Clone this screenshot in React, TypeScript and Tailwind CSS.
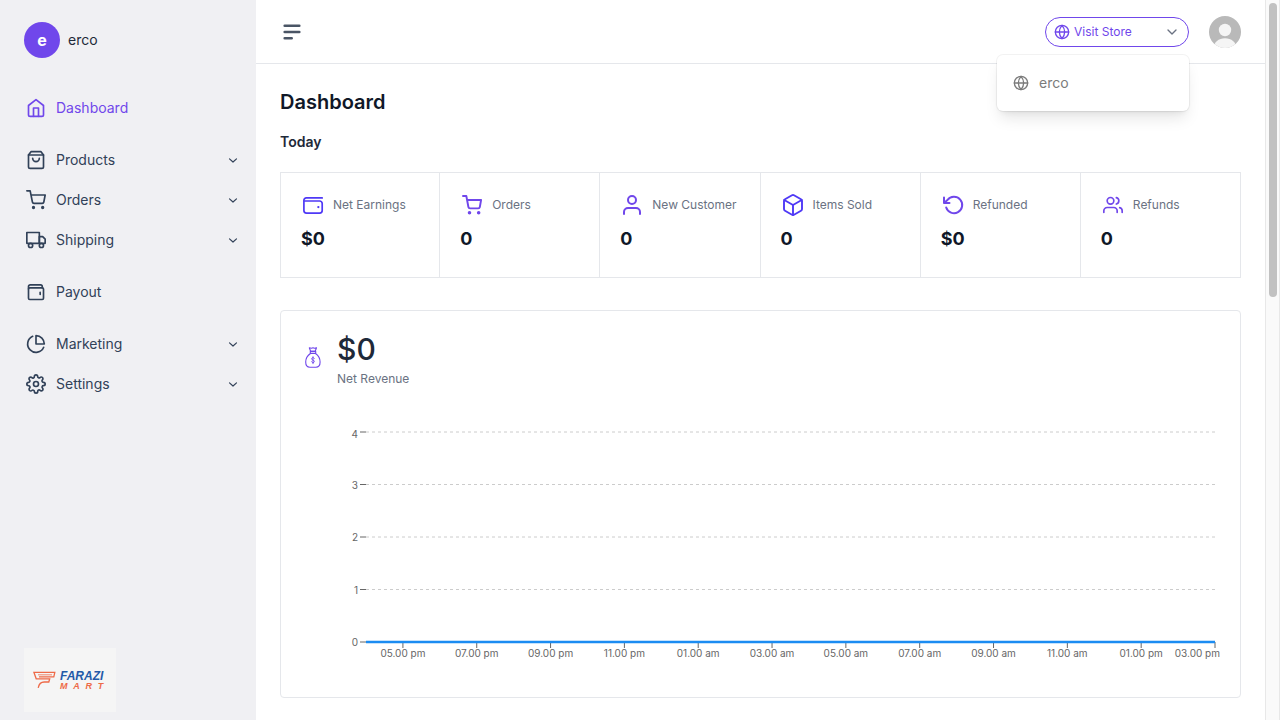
import type { ReactNode } from 'react';

function Icon({ size = 20, stroke = 2, className = '', children }: { size?: number; stroke?: number; className?: string; children: ReactNode }) {
  return (
    <svg
      width={size}
      height={size}
      viewBox="0 0 24 24"
      fill="none"
      stroke="currentColor"
      strokeWidth={stroke}
      strokeLinecap="round"
      strokeLinejoin="round"
      aria-hidden="true"
      className={`shrink-0 ${className}`}
    >
      {children}
    </svg>
  );
}

const home = (
  <>
    <path d="M3 9l9-7 9 7v11a2 2 0 0 1-2 2H5a2 2 0 0 1-2-2z" />
    <path d="M9 22V12h6v10" />
  </>
);
const bag = (
  <>
    <path d="M6 2L3 6v14a2 2 0 0 0 2 2h14a2 2 0 0 0 2-2V6l-3-4z" />
    <path d="M3 6h18" />
    <path d="M16 10a4 4 0 0 1-8 0" />
  </>
);
const cart = (
  <>
    <circle cx="9" cy="21" r="1" />
    <circle cx="20" cy="21" r="1" />
    <path d="M1 1h4l2.68 13.39a2 2 0 0 0 2 1.61h9.72a2 2 0 0 0 2-1.61L23 6H6" />
  </>
);
const truck = (
  <>
    <path d="M1 3h15v13H1z" />
    <path d="M16 8h4l3 3v5h-7z" />
    <circle cx="5.5" cy="18.5" r="2.5" />
    <circle cx="18.5" cy="18.5" r="2.5" />
  </>
);
const payout = (
  <>
    <rect x="3" y="7" width="18" height="14" rx="1.5" />
    <path d="M3 8V5.500a2 2 0 0 1 2-2h12.500a2 2 0 0 1 2 2V7" />
    <path d="M17 12.500v2.500" />
  </>
);
const pie = (
  <>
    <path d="M21.210 15.890A10 10 0 1 1 8 2.830" />
    <path d="M22 12A10 10 0 0 0 12 2v10z" />
  </>
);
const gear = (
  <>
    <circle cx="12" cy="12" r="3" />
    <path d="M19.4 15a1.65 1.65 0 0 0 .33 1.82l.06.06a2 2 0 0 1 0 2.83 2 2 0 0 1-2.83 0l-.06-.06a1.65 1.65 0 0 0-1.82-.33 1.65 1.65 0 0 0-1 1.51V21a2 2 0 0 1-2 2 2 2 0 0 1-2-2v-.09A1.65 1.65 0 0 0 9 19.4a1.65 1.65 0 0 0-1.82.33l-.06.06a2 2 0 0 1-2.83 0 2 2 0 0 1 0-2.83l.06-.06a1.65 1.65 0 0 0 .33-1.82 1.65 1.65 0 0 0-1.51-1H3a2 2 0 0 1-2-2 2 2 0 0 1 2-2h.09A1.65 1.65 0 0 0 4.6 9a1.65 1.65 0 0 0-.33-1.82l-.06-.06a2 2 0 0 1 0-2.83 2 2 0 0 1 2.83 0l.06.06a1.65 1.65 0 0 0 1.82.33H9a1.65 1.65 0 0 0 1-1.51V3a2 2 0 0 1 2-2 2 2 0 0 1 2 2v.09a1.65 1.65 0 0 0 1 1.51 1.65 1.65 0 0 0 1.82-.33l.06-.06a2 2 0 0 1 2.83 0 2 2 0 0 1 0 2.83l-.06.06a1.65 1.65 0 0 0-.33 1.82V9a1.65 1.65 0 0 0 1.51 1H21a2 2 0 0 1 2 2 2 2 0 0 1-2 2h-.09a1.65 1.65 0 0 0-1.51 1z" />
  </>
);
const globe = (
  <>
    <circle cx="12" cy="12" r="10" />
    <path d="M2 12h20" />
    <path d="M12 2a15.3 15.3 0 0 1 4 10 15.3 15.3 0 0 1-4 10 15.3 15.3 0 0 1-4-10 15.3 15.3 0 0 1 4-10z" />
  </>
);
const chevron = <path d="M6 9l6 6 6-6" />;
const smallChevron = <path d="M6 10l6 5.500 6-5.500" />;

type NavItem = { label: string; icon: ReactNode; children?: boolean; active?: boolean };

const navGroups: NavItem[][] = [
  [{ label: 'Dashboard', icon: home, active: true }],
  [
    { label: 'Products', icon: bag, children: true },
    { label: 'Orders', icon: cart, children: true },
    { label: 'Shipping', icon: truck, children: true },
  ],
  [{ label: 'Payout', icon: payout }],
  [
    { label: 'Marketing', icon: pie, children: true },
    { label: 'Settings', icon: gear, children: true },
  ],
];

function NavRow({ item }: { item: NavItem }) {
  const content = (
    <>
      <Icon>{item.icon}</Icon>
      <span className="grow text-left">{item.label}</span>
      {item.children && <Icon size={14}>{smallChevron}</Icon>}
    </>
  );
  if (item.children) {
    return (
      <button type="button" className="flex h-10 w-full items-center gap-2.5 pr-4 pl-[26px] text-slate-700">
        {content}
      </button>
    );
  }
  return (
    <a href="#" className={`flex h-10 items-center gap-2.5 pr-4 pl-[26px] ${item.active ? 'text-[#7047eb]' : 'text-slate-700'}`}>
      {content}
    </a>
  );
}

function FaraziLogo() {
  return (
    <div className="mb-2 ml-6 flex h-16 w-[92px] items-center gap-1 bg-[#f5f5f5] pl-[9px]">
      <svg width="23" height="18" viewBox="0 0 23 18" fill="none" stroke="#ee6a48" strokeWidth="1.300" aria-hidden="true">
        <path d="M6 5.800h14.800l1-4.500H.9l2.300 6.500h13.500l-.9 3.200h-4.600c-3.300 0-5.200 2-6 5.800" />
        <path d="M5 3.800h14" strokeWidth=".8" />
      </svg>
      <div className="font-['Liberation_Sans'] italic">
        <div className="text-xs leading-3 font-bold text-[#245aa8]">FARAZI</div>
        <div className="flex justify-between text-[9px] leading-2 font-bold text-[#ee6a48]">
          <span>M</span>
          <span>A</span>
          <span>R</span>
          <span>T</span>
        </div>
      </div>
    </div>
  );
}

function Sidebar() {
  return (
    <aside className="flex w-64 shrink-0 flex-col bg-[#f0f0f3] text-sm">
      <div className="flex items-center gap-2 px-6 pt-[22px] pb-[30px] text-gray-800">
        <span className="flex size-9 items-center justify-center rounded-full bg-[#7047eb] text-base font-bold text-white">e</span>
        <span>erco</span>
      </div>
      <nav className="flex grow flex-col gap-3">
        {navGroups.map((group, i) => (
          <div key={i}>
            {group.map((item) => (
              <NavRow key={item.label} item={item} />
            ))}
          </div>
        ))}
      </nav>
      <FaraziLogo />
    </aside>
  );
}

function Header() {
  return (
    <header className="flex h-16 shrink-0 items-center justify-between border-b border-gray-200 px-6">
      <button type="button" aria-label="Toggle menu" className="text-gray-600">
        <Icon size={24} stroke={2.6}>
          <path d="M4.700 5.700h14.600M4.700 12h14.600M4.700 18.200h7" />
        </Icon>
      </button>
      <div className="flex items-center gap-5">
        <div className="relative">
          <button type="button" className="flex h-[30px] w-36 items-center gap-1 rounded-full border border-[#7047eb] px-2 text-xs text-[#7047eb]">
            <Icon size={16}>{globe}</Icon>
            <span className="grow text-left">Visit Store</span>
            <Icon size={16} className="text-gray-500">{chevron}</Icon>
          </button>
          <div className="absolute top-full right-0 z-10 mt-2 w-48 rounded-md bg-white py-2 shadow-lg ring-1 ring-black/5">
            <a href="#" className="flex h-10 items-center gap-2.5 px-4 text-sm text-[#7b7b7b]">
              <Icon size={16}>{globe}</Icon>
              erco
            </a>
          </div>
        </div>
        <button type="button" aria-label="Account">
          <svg width="32" height="32" viewBox="0 0 32 32" className="rounded-full" aria-hidden="true">
            <rect width="32" height="32" fill="#b9b9b9" />
            <circle cx="16" cy="14" r="6.200" fill="#f5f5f5" />
            <path d="M4.500 32c.5-6 5-9.800 11.500-9.800S27 26 27.500 32z" fill="#f5f5f5" />
          </svg>
        </button>
      </div>
    </header>
  );
}

const stats = [
  {
    label: 'Net Earnings',
    value: '$0',
    icon: (
      <Icon size={24} stroke={1.7} className="text-indigo-600">
        <path d="M21.200 4.900H5.300a2.400 2.400 0 0 0-2.400 2.400V17.600a2.600 2.600 0 0 0 2.600 2.600h13.100a2.600 2.600 0 0 0 2.600-2.600V10.600A2.600 2.600 0 0 0 18.600 8H4.200" />
        <path d="M17.300 14.100h.1" strokeWidth="2.200" />
      </Icon>
    ),
  },
  {
    label: 'Orders',
    value: '0',
    icon: (
      <span className="flex size-6 items-center justify-center text-[#7047eb]">
        <Icon size={20} stroke={2.3}>
          <circle cx="9" cy="21.200" r="1" fill="currentColor" />
          <circle cx="20" cy="21.200" r="1" fill="currentColor" />
          <path d="M1.200 1.200h4l2.480 13.190a2 2 0 0 0 2 1.610h9.720a2 2 0 0 0 2-1.610L22.900 6H6" />
        </Icon>
      </span>
    ),
  },
  {
    label: 'New Customer',
    value: '0',
    icon: (
      <Icon size={24} className="text-[#7047eb]">
        <path d="M20 21v-2a4 4 0 0 0-4-4H8a4 4 0 0 0-4 4v2" />
        <circle cx="12" cy="7" r="4" />
      </Icon>
    ),
  },
  {
    label: 'Items Sold',
    value: '0',
    icon: (
      <Icon size={24} stroke={1.9} className="text-indigo-600">
        <path d="M21 16V8a2 2 0 0 0-1-1.730l-7-4a2 2 0 0 0-2 0l-7 4A2 2 0 0 0 3 8v8a2 2 0 0 0 1 1.730l7 4a2 2 0 0 0 2 0l7-4A2 2 0 0 0 21 16z" />
        <path d="M3.270 6.960L12 12.010l8.730-5.050M12 22.080V12" />
      </Icon>
    ),
  },
  {
    label: 'Refunded',
    value: '$0',
    icon: (
      <Icon size={24} className="text-[#7047eb]">
        <path d="M5.200 14.500a8.200 8.200 0 1 0 1.300-7.500L3.500 9.500" />
        <path d="M3 4.500v5.500h5.500" />
      </Icon>
    ),
  },
  {
    label: 'Refunds',
    value: '0',
    icon: (
      <span className="flex size-6 items-center justify-center text-[#7047eb]">
        <Icon size={20}>
          <path d="M17 21v-2a4 4 0 0 0-4-4H5a4 4 0 0 0-4 4v2" />
          <circle cx="9" cy="7" r="4" />
          <path d="M23 21v-2a4 4 0 0 0-3-3.870M16 3.130a4 4 0 0 1 0 7.750" />
        </Icon>
      </span>
    ),
  },
];

function Stats() {
  return (
    <div className="mt-5 grid grid-cols-6 border-y border-gray-200">
      {stats.map((s) => (
        <div key={s.label} className="border-r border-gray-200 px-5 pt-5 pb-6 first:border-l">
          <div className="flex items-center gap-2 text-xs text-gray-500">
            {s.icon}
            {s.label}
          </div>
          <div className="mt-2 text-lg leading-7 font-bold text-gray-900">{s.value}</div>
        </div>
      ))}
    </div>
  );
}

const hours = ['05.00 pm', '07.00 pm', '09.00 pm', '11.00 pm', '01.00 am', '03.00 am', '05.00 am', '07.00 am', '09.00 am', '11.00 am', '01.00 pm', '03.00 pm'];
const levels = [4, 3, 2, 1, 0];

function Chart() {
  return (
    <div className="mt-[45px] pr-[25px] pb-[55px] pl-[85px]">
      <svg width="100%" height="210" className="block overflow-visible text-[10px]" role="img" aria-label="Net revenue by hour">
        {levels.map((n) => {
          const y = (4 - n) * 52.5;
          return (
            <g key={n}>
              {n > 0 && <line x1="0" x2="100%" y1={y} y2={y} stroke="#ccc" strokeDasharray="3 3" />}
              <line x1="-6" x2="0" y1={y} y2={y} stroke="#666" />
              <text x="-8" y={n === 4 ? y + 6 : y + 4} textAnchor="end" fill="#666">
                {n}
              </text>
            </g>
          );
        })}
        {hours.map((h, i) => {
          const x = `${((i * 2 + 1) / 23) * 100}%`;
          const last = i === hours.length - 1;
          return (
            <g key={h}>
              <line x1={x} x2={x} y1="210" y2="216" stroke="#666" />
              <text x={x} dx={last ? 5 : 0} y="225" textAnchor={last ? 'end' : 'middle'} fill="#666">
                {h}
              </text>
            </g>
          );
        })}
        <line x1="0" x2="100%" y1="210" y2="210" stroke="#1b8cf2" strokeWidth="2.500" />
      </svg>
    </div>
  );
}

function Revenue() {
  return (
    <section className="mt-8 rounded border border-gray-200">
      <div className="flex items-start gap-4 pt-5 pl-6">
        <svg width="16" height="21" viewBox="0 0 16 21" fill="none" stroke="#7047eb" strokeWidth="1.100" strokeLinejoin="round" strokeLinecap="round" className="mt-4" aria-hidden="true">
          <path d="M4.300.8l1.300 3.500h4.600L11.500.8l-2 .5L8 .8l-1.500.5z" />
          <path d="M5.300 4.400h5.400v2H5.300z" />
          <path d="M5.500 6.500C2.500 8.500.7 12 .7 15c0 3.200 1.400 5.200 4.200 5.200h6c2.800 0 4.200-2 4.200-5.200 0-3-1.700-6.500-4.700-8.500" />
          <path d="M9.300 11.500c-.3-.6-.7-.9-1.300-.9-.8 0-1.400.5-1.400 1.200 0 1.700 2.800.9 2.800 2.600 0 .7-.6 1.200-1.400 1.200-.7 0-1.200-.3-1.400-.9M8 9.700v7" strokeWidth=".9" />
        </svg>
        <div>
          <div className="text-3xl leading-9 font-medium text-gray-800">$0</div>
          <div className="mt-1 text-xs leading-4 text-gray-500">Net Revenue</div>
        </div>
      </div>
      <Chart />
    </section>
  );
}

export default function App() {
  return (
    <div className="flex h-screen overflow-hidden bg-white font-['Inter',sans-serif]">
      <Sidebar />
      <div className="flex min-w-0 grow flex-col">
        <Header />
        <main className="grow px-6 pt-6">
          <h1 className="text-xl leading-7 font-semibold text-gray-900">Dashboard</h1>
          <h2 className="mt-4 text-sm leading-5 font-semibold text-gray-800">Today</h2>
          <Stats />
          <Revenue />
        </main>
      </div>
      <div className="w-[15px] shrink-0 border-x border-[#e8e8e8] bg-[#fafafa] px-[3px] pt-[3px]" aria-hidden="true">
        <div className="h-[294px] w-2 rounded-full bg-[#c1c1c1]" />
      </div>
    </div>
  );
}
